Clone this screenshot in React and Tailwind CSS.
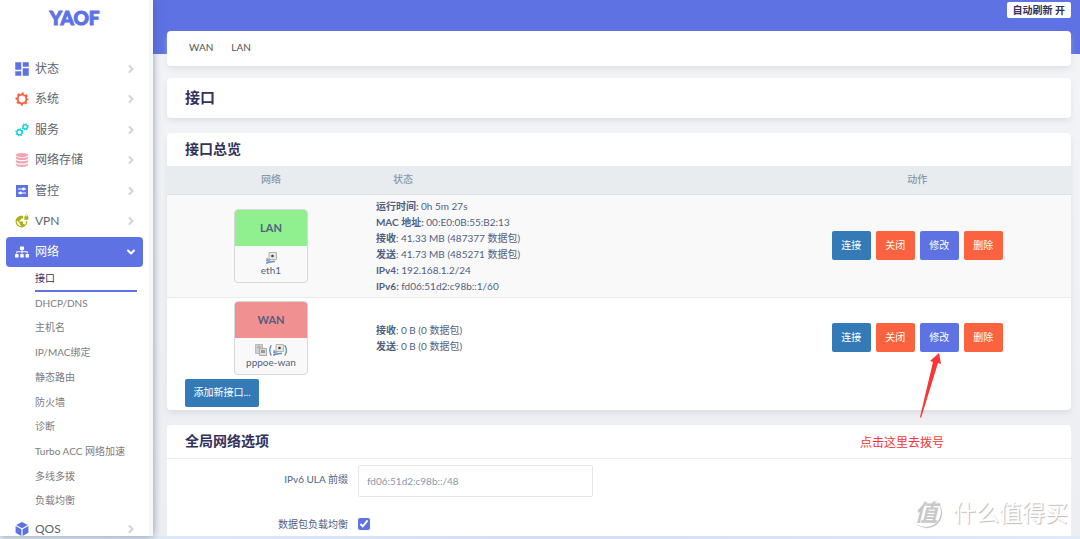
import React, { useState } from "react";
import { MdDashboard, MdVpnLock } from "react-icons/md";
import { FaSitemap } from "react-icons/fa";
import { ChevronRight, ChevronDown } from "lucide-react";

const SystemIcon = () => (
  <svg viewBox="0 0 24 24" className="h-3.5 w-3.5" fill="none" stroke="#fb6340">
    <circle cx="12" cy="12" r="7.500" strokeWidth="3.4" />
    <circle cx="12" cy="12" r="9.5" strokeWidth="3.4" strokeDasharray="4 3.461" strokeDashoffset="2" />
  </svg>
);

const ServicesIcon = () => (
  <svg viewBox="0 0 24 24" className="h-3.5 w-3.5" fill="none" stroke="#11cdef">
    <circle cx="7.500" cy="16" r="4.400" strokeWidth="2.4" />
    <circle cx="7.500" cy="16" r="6" strokeWidth="2" strokeDasharray="2.4 2.312" />
    <circle cx="17.5" cy="6.5" r="3.800" strokeWidth="2.2" />
    <circle cx="17.5" cy="6.5" r="5.2" strokeWidth="1.8" strokeDasharray="2 2.084" />
  </svg>
);

const StorageIcon = () => (
  <svg viewBox="0 0 24 24" className="h-3.5 w-3.5" fill="#f3a4b5">
    <ellipse cx="12" cy="3.5" rx="10.5" ry="3.5" />
    <path d="M1.5 6c2 3 19 3 21 0v3.500c-2 3.500-19 3.500-21 0z" />
    <path d="M1.500 12c2 3 19 3 21 0v3.500c-2 3.500-19 3.500-21 0z" />
    <path d="M1.500 18c2 3 19 3 21 0v2.500c-2 4.500-19 4.500-21 0z" />
  </svg>
);

const ControlIcon = () => (
  <svg viewBox="0 0 24 24" className="h-3 w-3">
    <path fill="#5e72e4" d="M0 0h24v24H0z" />
    <path stroke="#fff" strokeWidth="2.2" d="M4 8h16M4 16h16" />
    <circle cx="15" cy="8" r="2.8" fill="#fff" />
    <circle cx="9" cy="16" r="2.8" fill="#fff" />
  </svg>
);

const QosIcon = () => (
  <svg viewBox="0 0 24 24" className="h-3.5 w-3.5" fill="#5e72e4">
    <path d="M12 0l10 5-10 5.500L2 5zM1 7l10 5.500V24L1 18.500zM23 7l-10 5.500V24l10-5.500z" />
  </svg>
);

const EthernetIcon = () => (
  <svg viewBox="0 0 12 12" className="h-3 w-3">
    <path d="M4 .5h7.500v7H4z" fill="#e6e6e2" stroke="#b4b4b0" strokeWidth="1" />
    <circle cx="7.500" cy="4" r="1.300" fill="#444" />
    <path d="M1 8.500l3-2 2 1.500-3 2z" fill="#8aa9cc" />
    <path d="M1 11c3 0 4-2 9-1.500" fill="none" stroke="#5f8fc0" strokeWidth="1.500" />
    <path d="M2 6v3" stroke="#777" strokeWidth="1" />
  </svg>
);

const TunnelIcon = () => (
  <svg viewBox="0 0 12 12" className="h-3 w-3">
    <path d="M.5.5h7v9h-7z" fill="#cfcfcf" stroke="#b9b9b9" />
    <path d="M2 3h4" stroke="#999" />
    <path d="M4.500 4.500h7v7h-7z" fill="#e0e0e0" stroke="#aaa" />
    <path d="M6 6h4v3H6z" fill="#999" />
  </svg>
);

const menu = [
  { name: "状态", icon: <MdDashboard className="h-[18px] w-[18px] shrink-0 text-[#5e72e4]" /> },
  { name: "系统", icon: <SystemIcon /> },
  { name: "服务", icon: <ServicesIcon /> },
  { name: "网络存储", icon: <StorageIcon /> },
  { name: "管控", icon: <ControlIcon /> },
  { name: "VPN", icon: <MdVpnLock className="h-3.5 w-3.5 text-[#adb015]" /> },
  { name: "网络", icon: <FaSitemap className="h-3.5 w-3.5 text-white" />, open: true },
];

const subMenu = [
  "接口",
  "DHCP/DNS",
  "主机名",
  "IP/MAC绑定",
  "静态路由",
  "防火墙",
  "诊断",
  "Turbo ACC 网络加速",
  "多线多拨",
  "负载均衡",
];

const interfaces = [
  {
    name: "LAN",
    device: "eth1",
    color: "bg-[#90f090]",
    icons: <EthernetIcon />,
    status: [
      ["运行时间:", " 0h 5m 27s"],
      ["MAC 地址:", " 00:E0:0B:55:B2:13"],
      ["接收", ": 41.33 MB (487377 数据包)"],
      ["发送", ": 41.73 MB (485271 数据包)"],
      ["IPv4:", " 192.168.1.2/24"],
      ["IPv6:", " fd06:51d2:c98b::1/60"],
    ],
  },
  {
    name: "WAN",
    device: "pppoe-wan",
    color: "bg-[#f09090]",
    icons: (
      <>
        <TunnelIcon />
        <span className="ml-0.5 text-xs leading-3">(</span>
        <EthernetIcon />
        <span className="text-xs leading-3">)</span>
      </>
    ),
    status: [
      ["接收", ": 0 B (0 数据包)"],
      ["发送", ": 0 B (0 数据包)"],
    ],
  },
];

const actions = [
  { label: "连接", color: "bg-[#337ab7]" },
  { label: "关闭", color: "bg-[#fb6340]" },
  { label: "修改", color: "bg-[#5e72e4]" },
  { label: "删除", color: "bg-[#fb6340]" },
];

const MenuLink = ({ item }) => (
  <a
    href="#"
    className={`mx-1.5 flex h-[30px] items-center rounded pr-1.5 pl-2 text-xs ${
      item.open ? "bg-[#5e72e4] text-white" : "text-[#5c6470]"
    }`}
  >
    <span className="mr-1.5 flex w-[15px] justify-center">{item.icon}</span>
    <span className="grow">{item.name}</span>
    {item.open ? (
      <ChevronDown className="h-3 w-3" strokeWidth={4} />
    ) : (
      <ChevronRight className="h-3 w-3 text-[#ced4da]" strokeWidth={4} />
    )}
  </a>
);

const Sidebar = () => (
  <aside className="z-10 flex w-[153px] shrink-0 flex-col overflow-hidden border-r-4 border-[#f4f7fc] bg-white shadow-[0_0_8px_rgba(80,90,110,0.6)]">
    <a
      href="#"
      className="mb-[18px] h-9 text-center font-[Lato] text-[19px] leading-9 font-black text-[#5e72e4] [-webkit-text-stroke:1px_#5e72e4]"
    >
      YAOF
    </a>
    <nav>
      <div className="grid h-[213px]">
        {menu.map((item) => (
          <MenuLink key={item.name} item={item} />
        ))}
      </div>
      <ul className="mr-3 ml-[35px] grid h-[247px] auto-rows-fr text-[10px]">
        {subMenu.map((name, i) => (
          <li key={name} className={i === 0 ? "border-b-2 border-[#5e72e4]" : ""}>
            <a
              href="#"
              className={`block leading-[22px] whitespace-nowrap ${i === 0 ? "text-[#32325d]" : "text-[#7c7c80]"}`}
            >
              {name}
            </a>
          </li>
        ))}
      </ul>
      <MenuLink item={{ name: "QOS", icon: <QosIcon /> }} />
    </nav>
  </aside>
);

const InterfaceTable = () => (
  <table className="w-full table-fixed text-[10px] text-[#525f7f]">
    <thead>
      <tr className="h-7 border-b border-[#dee2e6] bg-[#e9ecef] text-[#8898aa]">
        <th className="w-[23%] font-medium">网络</th>
        <th className="pl-[18px] text-left font-medium">状态</th>
        <th className="w-[34%] font-medium">动作</th>
      </tr>
    </thead>
    <tbody>
      {interfaces.map((iface) => (
        <tr key={iface.name} className="border-b border-[#e9ecef] odd:bg-[#f9f9f9] last:border-0">
          <td className="py-[3px]">
            <div className="mx-auto w-[74px] overflow-hidden rounded border border-[#d8d8d8] bg-[#f9f9f9] text-center">
              <div className={`h-9 text-[11px] leading-9 font-bold ${iface.color}`}>{iface.name}</div>
              <div className="flex h-9 flex-col items-center justify-center leading-3">
                <span className="flex items-center">{iface.icons}</span>
                <span>{iface.device}</span>
              </div>
            </div>
          </td>
          <td className="px-px py-[3px] leading-4">
            {iface.status.map(([label, value]) => (
              <div key={label}>
                <strong>{label}</strong>
                {value}
              </div>
            ))}
          </td>
          <td>
            <div className="flex justify-center gap-[5px]">
              {actions.map((action) => (
                <button key={action.label} className={`h-[29px] w-[39px] rounded-xs text-white ${action.color}`}>
                  {action.label}
                </button>
              ))}
            </div>
          </td>
        </tr>
      ))}
    </tbody>
  </table>
);

const App = () => {
  const [prefix, setPrefix] = useState("fd06:51d2:c98b::/48");
  const [balance, setBalance] = useState(true);

  return (
    <div className="flex h-screen flex-col overflow-hidden font-[Lato,'Noto_Sans_CJK_SC',sans-serif]">
      <div className="flex min-h-0 grow">
        <Sidebar />
        <main className="grow overflow-hidden bg-linear-to-b from-[#f4f5f7] to-[#eceef2]">
          <header className="flex h-[54px] justify-end bg-[#5e72e4] pt-0.5 pr-[9px]">
            <button className="h-4 rounded-xs bg-white px-1.5 text-[10px] leading-4 font-bold text-[#32325d]">
              自动刷新 开
            </button>
          </header>
          <div className="relative -mt-[23px] mr-[9px] ml-3.5">
            <nav className="mb-3 flex h-[35px] items-center gap-[18px] rounded bg-white px-[22px] pb-0.5 text-[10px] text-[#525252] shadow-md shadow-gray-300/50">
              <a href="#">WAN</a>
              <a href="#">LAN</a>
            </nav>
            <h2 className="mb-[15px] rounded bg-white px-[18px] pb-0.5 text-[15px] leading-[38px] font-bold text-[#32325d] shadow-md shadow-gray-300/50">
              接口
            </h2>

            <section className="mb-[15px] overflow-hidden rounded bg-white pb-[3px] shadow-md shadow-gray-300/50">
              <h3 className="px-[18px] pb-0.5 text-sm leading-[31px] font-bold text-[#32325d]">接口总览</h3>
              <InterfaceTable />
              <button className="mx-[18px] mt-px h-7 w-[74px] rounded-xs bg-[#337ab7] text-[10px] text-white">
                添加新接口...
              </button>
            </section>

            <section className="rounded bg-white pb-10 text-[10px] text-[#525f7f]">
              <h3 className="border-b border-[#e9ecef] px-[18px] pb-0.5 text-sm leading-[31px] font-bold text-[#32325d]">
                全局网络选项
              </h3>
              <div className="mt-1.5 mb-5 flex">
                <label htmlFor="ula" className="mr-2.5 w-[181px] text-right leading-7">
                  IPv6 ULA 前缀
                </label>
                <input
                  id="ula"
                  value={prefix}
                  onChange={(e) => setPrefix(e.target.value)}
                  className="h-8 w-[235px] rounded-xs border border-[#e4e7ea] px-2 text-[#8898aa]"
                />
              </div>
              <div className="flex items-center">
                <label htmlFor="balance" className="mr-2.5 w-[181px] text-right">
                  数据包负载均衡
                </label>
                <input
                  id="balance"
                  type="checkbox"
                  checked={balance}
                  onChange={(e) => setBalance(e.target.checked)}
                  className="h-3 w-3 accent-[#5e72e4]"
                />
              </div>
            </section>

            {/* note pointing at the WAN edit button */}
            <div className="absolute top-[322px] right-[127px] text-[#f93535]">
              <svg viewBox="0 0 24 66" className="ml-[59px] h-[66px] w-6" fill="currentColor">
                <path d="M20 0l2 11-3-1L2 65l-1-1L14 9l-3-1z" />
              </svg>
              <p className="mt-3 text-xs leading-6">点击这里去拨号</p>
            </div>
          </div>
        </main>
      </div>
      <div className="h-[3px] shrink-0 bg-linear-to-r from-[#e2edf8] via-[#d3def5] to-[#dfebf7]" />
      <div className="absolute right-3 bottom-[11px] flex items-center gap-3 text-white [text-shadow:1px_1px_1px_#bbb]">
        <span className="flex h-[30px] w-[30px] items-center justify-center rounded-full text-[23px] font-bold text-[#c8c8c8] italic shadow-[1px_1px_1px_#bbb] [text-shadow:none]">
          值
        </span>
        <span className="text-[23px] leading-8">什么值得买</span>
      </div>
    </div>
  );
};

export default App;
